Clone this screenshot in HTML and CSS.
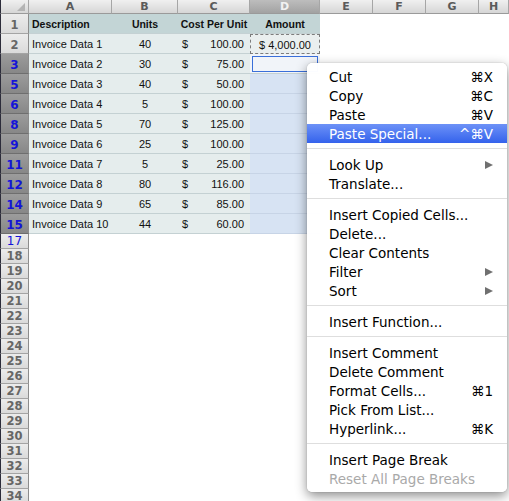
FILE: index.html
```html
<!DOCTYPE html>
<html lang="en">
<head>
    <meta charset="UTF-8">
    <title>Invoice Sheet</title>
    <link rel="stylesheet" href="styles.css">
</head>
<body>

    <div class="sheet">
        <!-- Column letters -->
        <div class="col-heads">
            <div class="corner"></div>
            <div class="col-head">A</div>
            <div class="col-head">B</div>
            <div class="col-head">C</div>
            <div class="col-head picked">D</div>
            <div class="col-head">E</div>
            <div class="col-head">F</div>
            <div class="col-head">G</div>
            <div class="col-head">H</div>
        </div>

        <div class="row">
            <div class="row-num">1</div>
            <div class="cell title">Description</div>
            <div class="cell title center">Units</div>
            <div class="cell title center">Cost Per Unit</div>
            <div class="cell title center">Amount</div>
        </div>
        <div class="row">
            <div class="row-num">2</div>
            <div class="cell">Invoice Data 1</div>
            <div class="cell center">40</div>
            <div class="cell money"><span>$</span><span>100.00</span></div>
            <div class="cell copied">$ 4,000.00</div>
        </div>
        <div class="row">
            <div class="row-num sel">3</div>
            <div class="cell">Invoice Data 2</div>
            <div class="cell center">30</div>
            <div class="cell money"><span>$</span><span>75.00</span></div>
            <div class="cell active"></div>
        </div>
        <div class="row">
            <div class="row-num sel">5</div>
            <div class="cell">Invoice Data 3</div>
            <div class="cell center">40</div>
            <div class="cell money"><span>$</span><span>50.00</span></div>
            <div class="cell picked"></div>
        </div>
        <div class="row">
            <div class="row-num sel">6</div>
            <div class="cell">Invoice Data 4</div>
            <div class="cell center">5</div>
            <div class="cell money"><span>$</span><span>100.00</span></div>
            <div class="cell picked"></div>
        </div>
        <div class="row">
            <div class="row-num sel">8</div>
            <div class="cell">Invoice Data 5</div>
            <div class="cell center">70</div>
            <div class="cell money"><span>$</span><span>125.00</span></div>
            <div class="cell picked"></div>
        </div>
        <div class="row">
            <div class="row-num sel">9</div>
            <div class="cell">Invoice Data 6</div>
            <div class="cell center">25</div>
            <div class="cell money"><span>$</span><span>100.00</span></div>
            <div class="cell picked"></div>
        </div>
        <div class="row">
            <div class="row-num sel">11</div>
            <div class="cell">Invoice Data 7</div>
            <div class="cell center">5</div>
            <div class="cell money"><span>$</span><span>25.00</span></div>
            <div class="cell picked"></div>
        </div>
        <div class="row">
            <div class="row-num sel">12</div>
            <div class="cell">Invoice Data 8</div>
            <div class="cell center">80</div>
            <div class="cell money"><span>$</span><span>116.00</span></div>
            <div class="cell picked"></div>
        </div>
        <div class="row">
            <div class="row-num sel">14</div>
            <div class="cell">Invoice Data 9</div>
            <div class="cell center">65</div>
            <div class="cell money"><span>$</span><span>85.00</span></div>
            <div class="cell picked"></div>
        </div>
        <div class="row">
            <div class="row-num sel">15</div>
            <div class="cell">Invoice Data 10</div>
            <div class="cell center">44</div>
            <div class="cell money"><span>$</span><span>60.00</span></div>
            <div class="cell picked"></div>
        </div>

        <!-- Empty rows below the data -->
        <div class="row empty"><div class="row-num filtered">17</div></div>
        <div class="row empty"><div class="row-num">18</div></div>
        <div class="row empty"><div class="row-num">19</div></div>
        <div class="row empty"><div class="row-num">20</div></div>
        <div class="row empty"><div class="row-num">21</div></div>
        <div class="row empty"><div class="row-num">22</div></div>
        <div class="row empty"><div class="row-num">23</div></div>
        <div class="row empty"><div class="row-num">24</div></div>
        <div class="row empty"><div class="row-num">25</div></div>
        <div class="row empty"><div class="row-num">26</div></div>
        <div class="row empty"><div class="row-num">27</div></div>
        <div class="row empty"><div class="row-num">28</div></div>
        <div class="row empty"><div class="row-num">29</div></div>
        <div class="row empty"><div class="row-num">30</div></div>
        <div class="row empty"><div class="row-num">31</div></div>
        <div class="row empty"><div class="row-num">32</div></div>
        <div class="row empty"><div class="row-num">33</div></div>
        <div class="row empty"><div class="row-num">34</div></div>
    </div>

    <!-- Right-click menu -->
    <div class="context-menu">
        <div class="item"><span>Cut</span><span class="key">⌘X</span></div>
        <div class="item"><span>Copy</span><span class="key">⌘C</span></div>
        <div class="item"><span>Paste</span><span class="key">⌘V</span></div>
        <div class="item hover"><span>Paste Special...</span><span class="key">^⌘V</span></div>
        <div class="sep"></div>
        <div class="item"><span>Look Up</span><span class="arrow"></span></div>
        <div class="item"><span>Translate...</span></div>
        <div class="sep"></div>
        <div class="item"><span>Insert Copied Cells...</span></div>
        <div class="item"><span>Delete...</span></div>
        <div class="item"><span>Clear Contents</span></div>
        <div class="item"><span>Filter</span><span class="arrow"></span></div>
        <div class="item"><span>Sort</span><span class="arrow"></span></div>
        <div class="sep"></div>
        <div class="item"><span>Insert Function...</span></div>
        <div class="sep"></div>
        <div class="item"><span>Insert Comment</span></div>
        <div class="item"><span>Delete Comment</span></div>
        <div class="item"><span>Format Cells...</span><span class="key">⌘1</span></div>
        <div class="item"><span>Pick From List...</span></div>
        <div class="item"><span>Hyperlink...</span><span class="key">⌘K</span></div>
        <div class="sep"></div>
        <div class="item"><span>Insert Page Break</span></div>
        <div class="item disabled"><span>Reset All Page Breaks</span></div>
    </div>

</body>
</html>
```

FILE: styles.css
```css
/* Page */
body, html {
    margin: 0;
    padding: 0;
    height: 100%;
    background: #fff;
    overflow: hidden;
    position: relative;
}

* {
    box-sizing: border-box;
}

/* Sheet grid */
.sheet {
    font-family: 'Liberation Sans', Arial, sans-serif;
    font-size: 10.5px;
    color: #111;
}

.col-heads {
    display: grid;
    grid-template-columns: 29px 83px 66px 72px 70px 53px 53px 53px 1fr;
    height: 14px;
}
.corner, .col-head {
    background: linear-gradient(to bottom, #f0f0f0, #d6d6d6);
    border-right: 1px solid #a6a6a6;
    border-bottom: 1px solid #9a9a9a;
}
.corner {
    position: relative;
    border-left: 1px solid #2c2c3a;
}
.corner::after {
    content: "";
    position: absolute;
    right: 3px;
    bottom: 2px;
    border-left: 8px solid transparent;
    border-bottom: 8px solid #b4b4b4;
}
.col-head {
    display: flex;
    align-items: center;
    justify-content: center;
    font-family: 'DejaVu Sans', sans-serif;
    font-weight: bold;
    font-size: 11px;
    color: #5a5a5a;
}
.col-head.picked {
    background: linear-gradient(to bottom, #bdbdbd, #a2a2a2);
    color: #f2f2f2;
}

/* Rows */
.row {
    display: grid;
    grid-template-columns: 29px 83px 66px 72px 70px 1fr;
    height: 20px;
}
.row.empty {
    height: 15px;
}

.row-num {
    display: flex;
    align-items: flex-end;
    justify-content: center;
    padding-bottom: 1px;
    background: linear-gradient(to bottom, #ececec, #dadada);
    border-left: 1px solid #2c2c3a;
    border-right: 1px solid #8c8c8c;
    border-bottom: 1px solid #a4a4a4;
    font-family: 'DejaVu Sans', sans-serif;
    font-weight: bold;
    font-size: 11.5px;
    color: #666;
}
.row.empty .row-num {
    padding-bottom: 0;
    align-items: center;
}
.row-num.sel {
    background: linear-gradient(to bottom, #9c9c9c, #878787);
    border-bottom-color: #6e6e6e;
    color: #1414d8;
    font-size: 12px;
}
.row-num.filtered {
    color: #1414d8;
    font-weight: normal;
    font-size: 12px;
}

/* Cells */
.cell {
    display: flex;
    align-items: flex-end;
    padding: 0 3px 3px;
    background: #e5eded;
    border-bottom: 1px solid #c4d1d3;
    white-space: nowrap;
    font-size: 11px;
}
.cell.title {
    background: #c3d5d6;
    font-weight: bold;
    font-size: 10.5px;
}
.cell.center {
    justify-content: center;
}
.cell.money {
    justify-content: space-between;
    padding-left: 4px;
    padding-right: 6px;
}
.cell.copied {
    justify-content: center;
    border: 1px dashed #7c7c7c;
    padding-bottom: 2px;
    background: #eaefef;
}
.cell.active {
    background: #f1f4f9;
    outline: 1px solid #3a6fd9;
    outline-offset: -3px;
}
.cell.picked {
    background: #d7e3f3;
    border-bottom-color: #c7d4e6;
}

/* Context menu */
.context-menu {
    position: absolute;
    top: 63px;
    left: 307px;
    width: 200px;
    padding: 4px 0;
    background: rgba(255, 255, 255, 0.98);
    border-radius: 5px;
    box-shadow: 0px 4px 12px rgba(0, 0, 0, 0.45), 0 0 1px rgba(0, 0, 0, 0.4);
    font-family: 'DejaVu Sans', sans-serif;
    font-size: 13.5px;
    color: #000;
}
.item {
    display: flex;
    align-items: center;
    justify-content: space-between;
    height: 19px;
    padding: 0 14px 0 22px;
}
.item.hover {
    background: linear-gradient(to bottom, #6d92f7, #3462ec);
    color: #fff;
}
.item.disabled {
    color: #a9a9a9;
}
.sep {
    height: 1px;
    margin: 5px 0 6px;
    background: #dedede;
}
.arrow {
    width: 0;
    height: 0;
    border-left: 8px solid #707070;
    border-top: 4.5px solid transparent;
    border-bottom: 4.5px solid transparent;
}
```
